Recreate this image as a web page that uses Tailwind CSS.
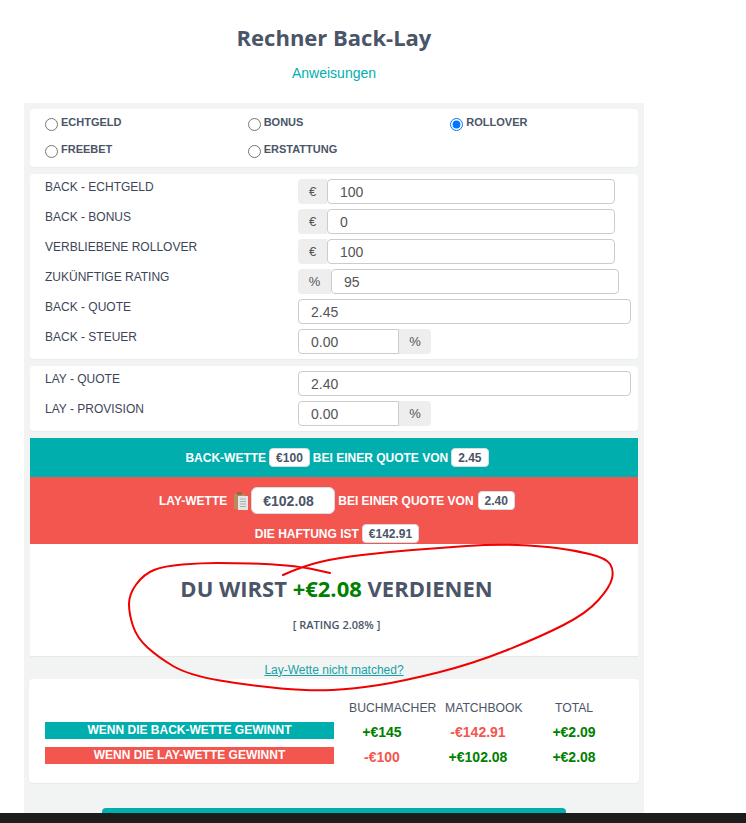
<!DOCTYPE html>
<html lang="de">
<head>
    <meta charset="UTF-8">
    <meta name="viewport" content="width=device-width, initial-scale=1.0">
    <title>Rechner Back-Lay</title>
    <script src="https://cdn.jsdelivr.net/npm/@tailwindcss/browser@4"></script>
</head>
<body class="bg-white relative h-[823px] overflow-hidden font-['Liberation_Sans',Arial,sans-serif] text-[#4a5568]">
    <div class="w-[620px] ml-6">
        <div class="h-[103px] flex flex-col items-center">
            <h1 class="mt-[21px] h-8 leading-8 text-[22px] font-bold font-['Open_Sans',sans-serif]">Rechner Back-Lay</h1>
            <a href="#" class="mt-[12px] text-sm leading-4 text-[#00aeae]">Anweisungen</a>
        </div>

        <div class="bg-[#f2f4f3] h-[720px] px-1.5 pt-1.5">
            <!-- bet type -->
            <div class="bg-white rounded h-[58px] pl-[15px] pt-1.5 grid grid-cols-[repeat(3,202.67px)] auto-rows-[27px] shadow-[0_1px_1px_#e9ecec]">
                <label class="flex items-start gap-[3px] text-[11px] font-bold leading-[14px]"><input type="radio" name="t" class="mt-[3px]"><span>ECHTGELD</span></label>
                <label class="flex items-start gap-[3px] text-[11px] font-bold leading-[14px]"><input type="radio" name="t" class="mt-[3px]"><span>BONUS</span></label>
                <label class="flex items-start gap-[3px] text-[11px] font-bold leading-[14px]"><input type="radio" name="t" class="mt-[3px]" checked><span>ROLLOVER</span></label>
                <label class="flex items-start gap-[3px] text-[11px] font-bold leading-[14px]"><input type="radio" name="t" class="mt-[3px]"><span>FREEBET</span></label>
                <label class="flex items-start gap-[3px] text-[11px] font-bold leading-[14px]"><input type="radio" name="t" class="mt-[3px]"><span>ERSTATTUNG</span></label>
            </div>

            <!-- back -->
            <div class="bg-white rounded mt-[7px] pt-[5px] pl-[15px] shadow-[0_1px_1px_#e9ecec]">
                <div class="flex h-[30px]">
                    <div class="w-[253px] text-xs leading-4 text-[#3d4658]">BACK - ECHTGELD</div>
                    <div class="flex h-[25px]">
                        <span class="w-[29px] bg-[#eeeeee] rounded-l text-[13px] text-[#555] flex items-center justify-center">€</span>
                        <input readonly value="100" class="w-[288px] px-3 border border-[#ccc] rounded text-sm text-[#555]">
                    </div>
                </div>
                <div class="flex h-[30px]">
                    <div class="w-[253px] text-xs leading-4 text-[#3d4658]">BACK - BONUS</div>
                    <div class="flex h-[25px]">
                        <span class="w-[29px] bg-[#eeeeee] rounded-l text-[13px] text-[#555] flex items-center justify-center">€</span>
                        <input readonly value="0" class="w-[288px] px-3 border border-[#ccc] rounded text-sm text-[#555]">
                    </div>
                </div>
                <div class="flex h-[30px]">
                    <div class="w-[253px] text-xs leading-4 text-[#3d4658]">VERBLIEBENE ROLLOVER</div>
                    <div class="flex h-[25px]">
                        <span class="w-[29px] bg-[#eeeeee] rounded-l text-[13px] text-[#555] flex items-center justify-center">€</span>
                        <input readonly value="100" class="w-[288px] px-3 border border-[#ccc] rounded text-sm text-[#555]">
                    </div>
                </div>
                <div class="flex h-[30px]">
                    <div class="w-[253px] text-xs leading-4 text-[#3d4658]">ZUKÜNFTIGE RATING</div>
                    <div class="flex h-[25px]">
                        <span class="w-[33px] bg-[#eeeeee] rounded-l text-[13px] text-[#555] flex items-center justify-center">%</span>
                        <input readonly value="95" class="w-[288px] px-3 border border-[#ccc] rounded text-sm text-[#555]">
                    </div>
                </div>
                <div class="flex h-[30px]">
                    <div class="w-[253px] text-xs leading-4 text-[#3d4658]">BACK - QUOTE</div>
                    <input readonly value="2.45" class="w-[333px] h-[25px] px-3 border border-[#ccc] rounded text-sm text-[#555]">
                </div>
                <div class="flex h-[30px]">
                    <div class="w-[253px] text-xs leading-4 text-[#3d4658]">BACK - STEUER</div>
                    <div class="flex h-[25px]">
                        <input readonly value="0.00" class="w-[101px] px-3 border border-[#ccc] rounded-l text-sm text-[#555]">
                        <span class="w-8 bg-[#eeeeee] rounded-r text-[13px] text-[#555] flex items-center justify-center">%</span>
                    </div>
                </div>
            </div>

            <!-- lay -->
            <div class="bg-white rounded mt-[7px] pt-[5px] pl-[15px] shadow-[0_1px_1px_#e9ecec]">
                <div class="flex h-[30px]">
                    <div class="w-[253px] text-xs leading-4 text-[#3d4658]">LAY - QUOTE</div>
                    <input readonly value="2.40" class="w-[333px] h-[25px] px-3 border border-[#ccc] rounded text-sm text-[#555]">
                </div>
                <div class="flex h-[30px]">
                    <div class="w-[253px] text-xs leading-4 text-[#3d4658]">LAY - PROVISION</div>
                    <div class="flex h-[25px]">
                        <input readonly value="0.00" class="w-[101px] px-3 border border-[#ccc] rounded-l text-sm text-[#555]">
                        <span class="w-8 bg-[#eeeeee] rounded-r text-[13px] text-[#555] flex items-center justify-center">%</span>
                    </div>
                </div>
            </div>

            <!-- result bars -->
            <div class="mt-[7px] h-[39px] pl-1.5 bg-[#00aeae] text-white text-xs font-bold flex items-center justify-center gap-[3px]">
                <span>BACK-WETTE</span>
                <span class="h-[19px] px-[6px] flex items-center bg-white text-[#4a5568] rounded border border-[#d5dde0]">€100</span>
                <span>BEI EINER QUOTE VON</span>
                <span class="h-[19px] px-[6px] flex items-center bg-white text-[#4a5568] rounded border border-[#d5dde0]">2.45</span>
            </div>
            <div class="h-[67px] pl-1.5 bg-[#f3564f] text-white text-xs font-bold">
                <div class="pt-[10px] flex items-center justify-center gap-[3px]">
                    <span>LAY-WETTE</span>
                    <svg class="ml-1" width="14" height="18" viewBox="0 0 14 18">
                        <rect x="0" y="2" width="11" height="15" rx="1" fill="#b98a5e"/>
                        <rect x="3" y="0" width="5" height="3" rx="1" fill="#8f6b4a"/>
                        <rect x="4" y="4" width="10" height="14" fill="#e4e6e6"/>
                        <path d="M6 7h6M6 9.500h6M6 12h6M6 14.500h6" stroke="#a9adad" stroke-width="1"/>
                    </svg>
                    <span class="w-[84px] h-[27px] pl-[11px] flex items-center bg-white text-sm text-[#4a5568] rounded-md border border-[#d5dde0]">€102.08</span>
                    <span>BEI EINER QUOTE VON</span>
                    <span class="ml-px h-[19px] px-[6px] flex items-center bg-white text-[#4a5568] rounded border border-[#d5dde0]">2.40</span>
                </div>
                <div class="mt-[10px] flex items-center justify-center gap-[3px]">
                    <span>DIE HAFTUNG IST</span>
                    <span class="h-[19px] px-[6px] flex items-center bg-white text-[#4a5568] rounded border border-[#d5dde0]">€142.91</span>
                </div>
            </div>
            <div class="h-[113px] pl-[5px] bg-white border-b border-[#e6e9e8] flex flex-col items-center font-['Open_Sans',sans-serif]">
                <div class="mt-[28px] h-8 leading-8 text-[22px] font-bold">DU WIRST <span class="text-[#008000]">+€2.08</span> VERDIENEN</div>
                <div class="mt-[13px] text-[11px] leading-4 font-semibold">[ RATING 2.08% ]</div>
            </div>
            <div class="h-[22px] pt-[3px] flex items-center justify-center">
                <a href="#" class="text-xs underline text-[#17a2a8]">Lay-Wette nicht matched?</a>
            </div>

            <!-- summary table -->
            <div class="-mx-px bg-white rounded h-[104px] pt-[21px] pl-4 shadow-[0_1px_1px_#e6e9e8]">
                <div class="flex h-[16px] pl-[304px] text-[12.2px] leading-4">
                    <span class="w-[96px]">BUCHMACHER</span>
                    <span class="w-[110px]">MATCHBOOK</span>
                    <span>TOTAL</span>
                </div>
                <div class="mt-[6px] flex h-[17px] items-center">
                    <div class="w-[289px] h-[17px] bg-[#00aeae] text-white text-xs leading-[16px] font-bold text-center">WENN DIE BACK-WETTE GEWINNT</div>
                    <div class="w-24 mt-[2px] text-center text-sm font-bold text-[#008000]">+€145</div>
                    <div class="w-24 mt-[2px] text-center text-sm font-bold text-[#f3564f]">-€142.91</div>
                    <div class="w-24 mt-[2px] text-center text-sm font-bold text-[#008000]">+€2.09</div>
                </div>
                <div class="mt-2 flex h-[17px] items-center">
                    <div class="w-[289px] h-[17px] bg-[#f3564f] text-white text-xs leading-[16px] font-bold text-center">WENN DIE LAY-WETTE GEWINNT</div>
                    <div class="w-24 mt-[2px] text-center text-sm font-bold text-[#f3564f]">-€100</div>
                    <div class="w-24 mt-[2px] text-center text-sm font-bold text-[#008000]">+€102.08</div>
                    <div class="w-24 mt-[2px] text-center text-sm font-bold text-[#008000]">+€2.08</div>
                </div>
            </div>

            <div class="mt-[25px] ml-[72px] w-[464px] h-10 bg-[#00aeae] rounded-t"></div>
        </div>
    </div>

    <!-- hand drawn red circle on top of the screenshot -->
    <svg class="absolute top-0 left-0 pointer-events-none" width="746" height="823">
        <path id="scribble" fill="none" stroke="#f00000" stroke-width="2" stroke-linecap="round"/>
    </svg>

    <div class="absolute bottom-0 left-0 right-0 h-[10px] bg-[#1c1c1c]"></div>

    <script>
        // smooth line through the points of the circle
        const pts = [[283,575],[303,566],[337,558],[387,552],[438,548],[495,544],[540,546],[573,550],[606,558],[614,570],[610,587],[587,613],[540,637],[472,664],[404,681],[354,689],[310,691],[252,686],[188,675],[158,657],[137,638],[129,614],[129,594],[144,574],[164,566],[201,563],[235,563],[269,564],[303,567],[330,573]];
        let d = `M${pts[0]}`;
        for (let i = 1; i < pts.length - 1; i++) {
            const mx = (pts[i][0] + pts[i + 1][0]) / 2;
            const my = (pts[i][1] + pts[i + 1][1]) / 2;
            d += `Q${pts[i]} ${mx},${my}`;
        }
        d += `L${pts[pts.length - 1]}`;
        document.getElementById("scribble").setAttribute("d", d);
    </script>
</body>
</html>
